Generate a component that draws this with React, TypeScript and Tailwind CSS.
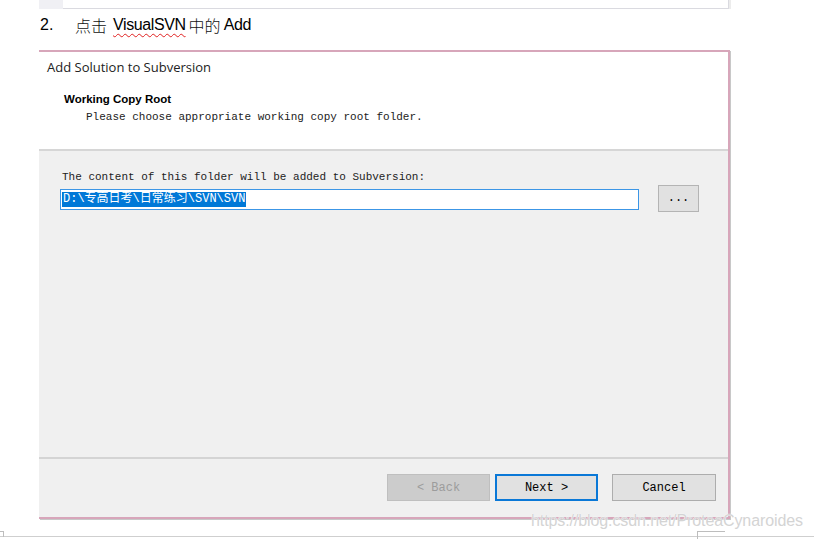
import React from "react";

const mono = { fontFamily: '"Liberation Mono", "Noto Sans CJK SC", monospace' };

export default function App() {
  return (
    <div className="relative w-[814px] h-[539px] bg-white overflow-hidden" style={{ fontFamily: '"Liberation Sans", "Noto Sans CJK SC", sans-serif' }}>
      {/* top fragment of previous block */}
      <div className="flex h-[9px]">
        <div className="ml-[39px] w-[24px] bg-[#f0f0f4]" />
        <div className="w-[666px] bg-white border-b border-r border-[#dadae0]" />
        <div className="w-[2px] bg-[#ececec]" />
      </div>

      {/* step line */}
      <div className="flex items-center h-[30px] mt-[1px] text-[16px] text-black leading-none">
        <span className="ml-[40px] w-[35px]">2.</span>
        <span style={{ fontFamily: '"Noto Sans CJK SC", sans-serif' }} className="text-[16px] font-light text-[#111]">点击</span>
        <span className="ml-[6px] underline decoration-wavy decoration-[#e02020] decoration-1 underline-offset-[3px] tracking-[-0.4px]">VisualSVN</span>
        <span style={{ fontFamily: '"Noto Sans CJK SC", sans-serif' }} className="ml-[3px] text-[16px] font-light text-[#111]">中的</span>
        <span className="ml-[3px] tracking-[-0.3px]">Add</span>
      </div>

      {/* dialog */}
      <div className="ml-[39px] mt-[10px] w-[691px] h-[469px] flex flex-col border-t-2 border-r-2 border-b-2 border-[#d7a6ba] shadow-[1px_1px_0_#c8c8c8]">
        <div className="h-[99px] bg-white border-b-2 border-[#d6d6d6] flex flex-col">
          <div className="ml-[8px] mt-[6px] text-[13px] text-[#222]" style={{ fontFamily: '"Open Sans", sans-serif' }}>Add Solution to Subversion</div>
          <div className="ml-[25px] mt-[14px] text-[11.5px] font-bold text-black leading-[14px]">Working Copy Root</div>
          <div className="ml-[47px] mt-[5px] text-[11px] text-[#222] leading-[13px]" style={mono}>Please choose appropriate working copy root folder.</div>
        </div>
        <div className="flex-1 bg-[#f0f0f0] flex flex-col">
          <div className="ml-[23px] mt-[20px] text-[11px] text-[#222] leading-[13px]" style={mono}>The content of this folder will be added to Subversion:</div>
          <div className="flex items-start mt-[1px]">
            <div className="ml-[21px] mt-[4px] w-[579px] h-[21px] bg-white border border-[#3c96e6] flex items-center px-[1px]">
              <span className="bg-[#0078d7] text-white text-[12px] leading-[15px] px-[1px]" style={mono}>D:\专高日考\日常练习\SVN\SVN</span>
            </div>
            <button className="ml-[19px] w-[41px] h-[27px] bg-[#e1e1e1] border border-[#b4b4b4] text-[12px] text-black leading-none pb-[2px]" style={mono}>...</button>
          </div>
          <div className="flex-1" />
          <div className="h-[2px] bg-[#d4d4d4]" />
          <div className="h-[58px] flex items-start pt-[15px]">
            <button className="ml-[348px] w-[103px] h-[27px] bg-[#cccccc] border border-[#bfbfbf] text-[12px] text-[#9c9c9c]" style={mono}>&lt; Back</button>
            <button className="ml-[5px] w-[103px] h-[27px] bg-[#e1e1e1] border-2 border-[#0a78d7] text-[12px] text-black" style={mono}>Next &gt;</button>
            <button className="ml-[14px] w-[104px] h-[27px] bg-[#e1e1e1] border border-[#adadad] text-[12px] text-black" style={mono}>Cancel</button>
          </div>
        </div>
      </div>

      {/* bottom rule */}
      <div className="mt-[17px] h-[1px] bg-[#cfcfcf]" />

      {/* small corner marks */}
      <div className="absolute left-0 top-[531px] w-[4px] h-[6px] border-t border-r border-[#bdbdbd]" />
      <div className="absolute left-[697px] top-[531px] w-[28px] h-[8px] border-t border-l border-[#bdbdbd]" />

      {/* watermark */}
      <div
        className="absolute left-[531px] top-[511px] text-[16px] leading-[20px] text-[#d4d4d4] tracking-[-0.1px]"
        style={{ fontFamily: '"Liberation Sans", sans-serif', textShadow: "0 0 1px #ffffff, 0 0 1px #ffffff" }}
      >
        https://blog.csdn.net/ProteaCynaroides
      </div>
    </div>
  );
}
